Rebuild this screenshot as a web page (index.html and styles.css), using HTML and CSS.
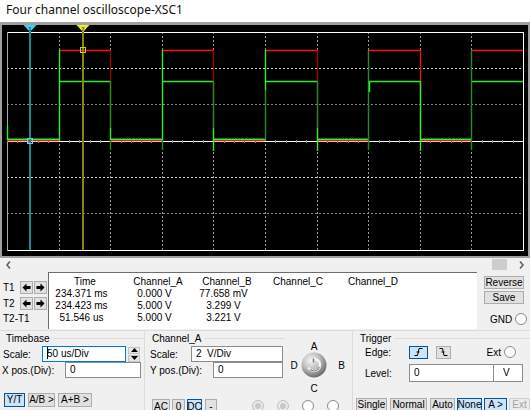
FILE: index.html
```html
<!DOCTYPE html>
<html>
<head>
  <title>Four channel oscilloscope-XSC1</title>
  <link rel="stylesheet" href="styles.css">
</head>
<body>

<div class="titlebar">Four channel oscilloscope-XSC1</div>

<div class="screen">
  <svg width="526" height="231" viewBox="2 25 526 231">
    <!-- grid -->
    <g fill="none" stroke-width="1" shape-rendering="crispEdges">
      <path d="M59.5 32V250M110.5 32V250M162.5 32V250M213.5 32V250M265.5 32V250M317.5 32V250M368.5 32V250M420.5 32V250M471.5 32V250" stroke="#9a9a9a" stroke-dasharray="2 2"/>
      <path d="M7 68.5H523M7 177.5H523" stroke="#d0d0d0" stroke-dasharray="2 2"/>
      <path d="M7 104.5H523M7 213.5H523" stroke="#8a8a8a" stroke-dasharray="2 2"/>
      <path d="M7 141.5H523" stroke="#ffffff"/>
      <path d="M17.5 140v3M28.5 140v3M38.5 140v3M48.5 140v3M69.5 140v3M79.5 140v3M90.5 140v3M100.5 140v3M121.5 140v3M131.5 140v3M141.5 140v3M151.5 140v3M172.5 140v3M182.5 140v3M193.5 140v3M203.5 140v3M224.5 140v3M234.5 140v3M244.5 140v3M255.5 140v3M275.5 140v3M286.5 140v3M296.5 140v3M306.5 140v3M327.5 140v3M337.5 140v3M348.5 140v3M358.5 140v3M379.5 140v3M389.5 140v3M399.5 140v3M409.5 140v3M430.5 140v3M440.5 140v3M451.5 140v3M461.5 140v3M482.5 140v3M492.5 140v3M502.5 140v3M513.5 140v3" stroke="#8c8c8c"/>
      <path d="M7 32.5H523.5V250.5H7" stroke="#ffffff"/>
      <path d="M7.5 32V251" stroke="#a8a8a8"/>
    </g>

    <!-- channel A -->
    <g fill="none" stroke-width="1.3">
      <path d="M7 140.5H59M110 140.5H162M213 140.5H265M317 140.5H368M420 140.5H471" stroke="#ff1010"/>
      <path d="M59 50.5H111M162 50.5H214M265 50.5H318M368 50.5H421M471 50.5H523" stroke="#ff1010"/>
      <path d="M110.5 50V141M213.5 50V141M317.5 50V141" stroke="#a00000"/>
      <path d="M420.5 50V141" stroke="#ff1010"/>
    </g>

    <!-- channel B -->
    <g fill="none" stroke-width="1.4">
      <path d="M7 139.3H59M110 139.3H162M213 139.3H265M317 139.3H368M420 139.3H471" stroke="#2cf02c"/>
      <path d="M59 81.5H110M162 81.5H213M265 81.5H317M368 81.5H420M471 81.5H523" stroke="#2cf02c"/>
      <path d="M265.5 90V140M368.5 50V150M471.5 50V150M162.5 140V150M110.5 81V128M213.5 81V128M317.5 81V128M110.5 141V150" stroke="#1f8f1f"/>
      <path d="M59.5 50V140M162.5 50V140M265.5 50V90M7.5 126V140M213.5 128V151M317.5 128V151M420.5 81V151M110.5 128V140M369.5 81V92" stroke="#2cf02c"/>
    </g>

    <!-- cursors -->
    <path d="M30 31V250" stroke="#1a8794" stroke-width="2"/>
    <path d="M83 31V250" stroke="#85850f" stroke-width="2"/>
    <polygon points="23.5,25 36.5,25 30,32" fill="#3fd3f2"/>
    <text x="30" y="30.5" class="cur-num" text-anchor="middle" fill="#0b4f5c">1</text>
    <polygon points="76.5,25 89.5,25 83,32" fill="#ecec2a"/>
    <text x="83" y="30.5" class="cur-num" text-anchor="middle" fill="#5c5c00">2</text>
    <rect x="80.5" y="47.5" width="5" height="5" fill="none" stroke="#d2c81e" shape-rendering="crispEdges"/>
    <rect x="27.5" y="138.5" width="5" height="5" fill="none" stroke="#5fd7f0" shape-rendering="crispEdges"/>
  </svg>
</div>

<div class="hscroll">
  <div class="sarrow">
    <svg width="5" height="8" viewBox="0 0 5 8"><polyline points="4,0.5 1,4 4,7.5" fill="none" stroke="#606060" stroke-width="1.6"/></svg>
  </div>
  <div class="track"><div class="thumb"></div></div>
  <div class="sarrow">
    <svg width="5" height="8" viewBox="0 0 5 8"><polyline points="1,0.5 4,4 1,7.5" fill="none" stroke="#606060" stroke-width="1.6"/></svg>
  </div>
</div>

<div class="readout">
  <div class="cursors">
    <div class="crow">
      <span class="clabel">T1</span>
      <button class="abtn"><svg width="9" height="9" viewBox="0 0 9 9"><path d="M0.5 4.5L4.5 0.5V3H8.5V6H4.5V8.5Z" fill="#000"/></svg></button>
      <button class="abtn"><svg width="9" height="9" viewBox="0 0 9 9"><path d="M8.5 4.5L4.5 0.5V3H0.5V6H4.5V8.5Z" fill="#000"/></svg></button>
    </div>
    <div class="crow">
      <span class="clabel">T2</span>
      <button class="abtn"><svg width="9" height="9" viewBox="0 0 9 9"><path d="M0.5 4.5L4.5 0.5V3H8.5V6H4.5V8.5Z" fill="#000"/></svg></button>
      <button class="abtn"><svg width="9" height="9" viewBox="0 0 9 9"><path d="M8.5 4.5L4.5 0.5V3H0.5V6H4.5V8.5Z" fill="#000"/></svg></button>
    </div>
    <div class="crow last"><span class="clabel">T2-T1</span></div>
  </div>

  <div class="values">
    <table>
      <tr>
        <th class="c1">Time</th>
        <th class="c2">Channel_A</th>
        <th class="c3">Channel_B</th>
        <th class="c4">Channel_C</th>
        <th class="c5">Channel_D</th>
      </tr>
      <tr><td>234.371 ms</td><td>0.000 V</td><td>77.658 mV</td><td></td><td></td></tr>
      <tr><td>234.423 ms</td><td>5.000 V</td><td>3.299 V</td><td></td><td></td></tr>
      <tr><td>51.546 us</td><td>5.000 V</td><td>3.221 V</td><td></td><td></td></tr>
    </table>
  </div>

  <div class="side">
    <button class="btn wide">Reverse</button>
    <button class="btn wide">Save</button>
    <div class="gnd"><span>GND</span><span class="radio"></span></div>
  </div>
</div>

<div class="controls">
  <div class="group tb">
    <div class="gtitle">Timebase</div>
    <div class="frow">
      <span class="flabel w39">Scale:</span>
      <div class="field focus w84"><span class="caret"></span>50 us/Div</div>
      <div class="spin">
        <div class="spin-half"><svg width="7" height="4" viewBox="0 0 7 4"><path d="M0 4L3.5 0L7 4Z" fill="#000"/></svg></div>
        <div class="spin-half"><svg width="7" height="4" viewBox="0 0 7 4"><path d="M0 0L3.5 4L7 0Z" fill="#000"/></svg></div>
      </div>
    </div>
    <div class="frow xpos">
      <span class="flabel w63">X pos.(Div):</span>
      <div class="field w76">0</div>
    </div>
    <div class="brow tb-btns">
      <button class="btn on" style="width:21px">Y/T</button>
      <button class="btn" style="width:27px">A/B &gt;</button>
      <button class="btn" style="width:34px">A+B &gt;</button>
    </div>
  </div>

  <div class="group ch">
    <div class="chbody">
      <div class="chleft">
        <div class="gtitle">Channel_A</div>
        <div class="frow">
          <span class="flabel w41">Scale:</span>
          <div class="field w92">2&nbsp; V/Div</div>
        </div>
        <div class="frow">
          <span class="flabel w63">Y pos.(Div):</span>
          <div class="field w70">0</div>
        </div>
      </div>
      <div class="knobbox">
        <span class="kA">A</span>
        <span class="kD">D</span>
        <svg class="knob" width="26" height="26" viewBox="0 0 26 26">
          <defs>
            <radialGradient id="kg" cx="38%" cy="32%" r="72%">
              <stop offset="0" stop-color="#f6f6f6"/>
              <stop offset="0.5" stop-color="#bdbdbd"/>
              <stop offset="1" stop-color="#646464"/>
            </radialGradient>
          </defs>
          <circle cx="13" cy="13" r="12.5" fill="url(#kg)"/>
          <path d="M7.5 15.5 A6 6 0 1 0 12.5 7" fill="none" stroke="#f4f4f4" stroke-width="2.4"/>
          <path d="M9 17.5 A6 6 0 0 0 18.5 15" fill="none" stroke="#8a8a8a" stroke-width="1.2"/>
          <path d="M12.5 6.5V10.5" stroke="#7a7a7a" stroke-width="1.4"/>
        </svg>
        <span class="kB">B</span>
        <span class="kC">C</span>
      </div>
    </div>
    <div class="brow ch-btns">
      <button class="btn low" style="width:18px">AC</button>
      <button class="btn low" style="width:13px;margin-left:-1px">0</button>
      <button class="btn low on" style="width:15px;margin-left:-1px">DC</button>
      <button class="btn low" style="width:12px">-</button>
      <div class="radios">
        <span class="radio dis"></span>
        <span class="radio dis"></span>
        <span class="radio"></span>
        <span class="radio"></span>
      </div>
    </div>
  </div>

  <div class="group tr">
    <div class="gtitle">Trigger</div>
    <div class="frow edge">
      <span class="flabel w44">Edge:</span>
      <button class="btn on" style="width:19px;height:13px">
        <svg width="9" height="8" viewBox="0 0 9 8"><path d="M0.5 7.5H3.5L5 0.5H8.5M2.5 4H5.5" fill="none" stroke="#000" stroke-width="1"/></svg>
      </button>
      <button class="btn" style="width:15px;height:13px;margin-left:8px">
        <svg width="9" height="8" viewBox="0 0 9 8"><path d="M0.5 0.5H3.5L5 7.5H8.5M2.5 4H5.5" fill="none" stroke="#000" stroke-width="1"/></svg>
      </button>
      <span class="ext">Ext</span>
      <span class="radio"></span>
    </div>
    <div class="frow level">
      <span class="flabel w44">Level:</span>
      <div class="field w85 tall">0</div>
      <div class="field unit tall">V</div>
    </div>
    <div class="brow tr-btns">
      <button class="btn" style="width:31px">Single</button>
      <button class="btn" style="width:37px">Normal</button>
      <button class="btn" style="width:25px">Auto</button>
      <button class="btn on" style="width:25px;margin-left:-1px">None</button>
      <button class="btn on" style="width:23px;margin-left:-1px">A &gt;</button>
      <button class="btn off" style="width:21px;margin-left:-1px">Ext</button>
    </div>
  </div>
</div>

</body>
</html>
```

FILE: styles.css
```css
* {
  box-sizing: border-box;
}
body {
  margin: 0;
  width: 530px;
  height: 410px;
  overflow: hidden;
  background: #f0f0f0;
  font-family: "Liberation Sans", Arial, sans-serif;
  font-size: 10px;
  color: #000;
}
.titlebar {
  height: 22px;
  background: #fff;
  padding-left: 6px;
  font-family: "Noto Sans", sans-serif;
  font-size: 12px;
  line-height: 20px;
  color: #111;
}
.screen {
  height: 236px;
  background: #000;
  border-style: solid;
  border-color: #a0a0a0;
  border-width: 3px 2px 2px 2px;
}
.screen svg {
  display: block;
}
.cur-num {
  font-family: "Liberation Sans", sans-serif;
  font-size: 6px;
  font-weight: bold;
}

/* scrollbar */
.hscroll {
  height: 13px;
  display: flex;
  align-items: center;
}
.sarrow {
  width: 17px;
  height: 13px;
  display: flex;
  align-items: center;
  justify-content: center;
}
.track {
  flex: 1;
  height: 13px;
  display: flex;
  align-items: center;
  justify-content: flex-end;
  padding-right: 6px;
}
.thumb {
  width: 15px;
  height: 11px;
  background: #cdcdcd;
}

/* readout */
.readout {
  display: flex;
  height: 59px;
}
.cursors {
  width: 48px;
  padding-top: 9px;
}
.crow {
  display: flex;
  align-items: center;
  height: 14px;
  margin-bottom: 2px;
}
.crow.last {
  height: 13px;
}
.clabel {
  width: 20px;
  padding-left: 3px;
  white-space: nowrap;
}
.abtn {
  width: 13px;
  height: 13px;
  margin-right: 1px;
  padding: 0;
  background: #e1e1e1;
  border: 1px solid #adadad;
  display: flex;
  align-items: center;
  justify-content: center;
}
.values {
  width: 429px;
  height: 57px;
  margin-top: 1px;
  background: #fff;
  border-left: 1px solid #6d6d6d;
  border-top: 1px solid #6d6d6d;
  padding-top: 3px;
}
.values table {
  border-collapse: collapse;
}
.values th,
.values td {
  padding: 0;
  height: 12px;
  line-height: 12px;
  text-align: center;
  font-weight: normal;
  white-space: nowrap;
}
.values td {
  padding-right: 7px;
}
.c1 { width: 72px; }
.c2 { width: 74px; }
.c3 { width: 64px; }
.c4 { width: 78px; }
.c5 { width: 72px; }

.side {
  flex: 1;
  padding: 5px 0 0 7px;
  display: flex;
  flex-direction: column;
  gap: 2px;
}
.gnd {
  display: flex;
  align-items: center;
  gap: 3px;
  margin-top: 7px;
  padding-left: 6px;
}

/* common controls */
.btn {
  height: 14px;
  padding: 0;
  font: inherit;
  line-height: 12px;
  color: #000;
  background: #e1e1e1;
  border: 1px solid #adadad;
  text-align: center;
  white-space: nowrap;
  display: flex;
  align-items: center;
  justify-content: center;
}
.btn.low {
  line-height: 9px;
}
.btn.wide {
  width: 40px;
  height: 13px;
}
.btn.on {
  background: #cce4f7;
  border-color: #005499;
}
.btn.off {
  color: #a3a3a3;
  background: #ececec;
  border-color: #cfcfcf;
}
.radio {
  width: 12px;
  height: 12px;
  border-radius: 50%;
  border: 1px solid #8a8a8a;
  background: #fff;
  flex: none;
}
.radio.dis {
  border-color: #c4c4c4;
  background: #c8c8c8;
  box-shadow: inset 0 0 0 2px #ececec;
}
.field {
  height: 16px;
  background: #fff;
  border: 1px solid #8c8c8c;
  padding-left: 4px;
  line-height: 14px;
  white-space: nowrap;
}
.field.focus {
  border-color: #0078d7;
}
.caret {
  display: inline-block;
  width: 1px;
  height: 12px;
  margin-right: -1px;
  background: #000;
  vertical-align: -2px;
}
.w39 { width: 39px; }
.w41 { width: 41px; }
.w44 { width: 44px; }
.w63 { width: 63px; }
.w70 { width: 70px; }
.w76 { width: 76px; }
.w84 { width: 84px; }
.w85 { width: 85px; }
.w92 { width: 92px; }

/* bottom groups */
.controls {
  display: flex;
  height: 80px;
  border-top: 1px solid #dcdcdc;
}
.group {
  flex: none;
}
.tb {
  width: 145px;
  border-right: 1px solid #dcdcdc;
}
.ch {
  width: 208px;
  border-right: 1px solid #dcdcdc;
}
.tr {
  flex: 1;
}
.gtitle {
  display: flex;
  align-items: center;
  height: 13px;
  line-height: 13px;
  margin-top: 1px;
  padding-left: 6px;
}
.gtitle::after {
  content: "";
  flex: 1;
  height: 1px;
  margin-left: 3px;
  background: #dcdcdc;
}
.ch .gtitle,
.tr .gtitle {
  padding-left: 7px;
}
.frow {
  display: flex;
  align-items: center;
  height: 16px;
}
.tb .frow {
  padding-left: 3px;
}
.tb .frow:nth-child(2),
.ch .frow:nth-child(2) {
  margin-top: 1px;
}
.tb .xpos {
  padding-left: 2px;
}
.flabel {
  white-space: nowrap;
}
.spin {
  width: 12px;
  height: 15px;
  margin-left: 2px;
  display: flex;
  flex-direction: column;
  gap: 1px;
}
.spin-half {
  flex: 1;
  background: #e6e6e6;
  border: 1px solid #c4c4c4;
  display: flex;
  align-items: center;
  justify-content: center;
}
.brow {
  display: flex;
  align-items: flex-start;
}
.tb-btns {
  margin-top: 15px;
  padding-left: 4px;
  gap: 3px;
}

.chbody {
  display: flex;
}
.chleft {
  width: 140px;
}
.ch .frow {
  padding-left: 5px;
}
.knobbox {
  margin: 10px 0 0 2px;
  display: grid;
  grid-template-columns: 14px 26px 22px;
  grid-template-rows: 11px 26px 16px;
  line-height: 11px;
}
.kA {
  grid-column: 2;
  grid-row: 1;
  text-align: center;
}
.kD {
  grid-column: 1;
  grid-row: 2;
  align-self: center;
  text-align: center;
}
.knob {
  grid-column: 2;
  grid-row: 2;
  display: block;
}
.kB {
  grid-column: 3;
  grid-row: 2;
  align-self: center;
  text-align: right;
  padding-right: 4px;
}
.kC {
  grid-column: 2;
  grid-row: 3;
  text-align: center;
  padding-top: 5px;
}
.ch-btns {
  margin-top: 5px;
  padding-left: 7px;
  gap: 3px;
}
.radios {
  display: flex;
  gap: 13px;
  margin: 1px 0 0 32px;
}

.tr .frow {
  padding-left: 12px;
}
.edge {
  height: 14px;
}
.ext {
  margin-left: auto;
  margin-right: 3px;
}
.edge .radio {
  margin-right: 14px;
}
.level {
  margin-top: 5px;
  height: 18px !important;
}
.field.tall {
  height: 18px;
  line-height: 16px;
}
.field.unit {
  width: 29px;
  padding-left: 9px;
  border-left: none;
}
.tr-btns {
  margin-top: 16px;
  padding-left: 3px;
  gap: 3px;
}
```
